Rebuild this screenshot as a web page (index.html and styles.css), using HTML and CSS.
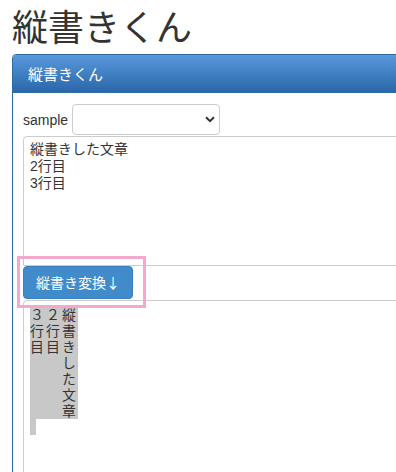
FILE: index.html
```
<!DOCTYPE html>
<html lang="ja">
<head>
    <meta charset="UTF-8">
    <title>縦書きくん</title>
    <link rel="stylesheet" href="styles.css">
</head>
<body>
    <h1 class="title">縦書きくん</h1>

    <div class="panel">
        <div class="panel-heading">縦書きくん</div>
        <div class="panel-body">
            <div class="sample-row">
                <label for="sample">sample</label>
                <div class="select">
                    <svg width="10" height="7" viewBox="0 0 10 7"><path d="M1 1.2 L5 5.2 L9 1.2" fill="none" stroke="#333" stroke-width="2"/></svg>
                </div>
            </div>

            <div class="textarea source">縦書きした文章<br>2行目<br>3行目</div>

            <div class="convert">
                <button class="btn">縦書き変換↓</button>
            </div>

            <div class="textarea result">
                <span class="line">３２縦</span>
                <span class="line">行行書</span>
                <span class="line">目目き</span>
                <span class="line">　　し</span>
                <span class="line">　　た</span>
                <span class="line">　　文</span>
                <span class="line">　　章</span>
                <span class="line blank"></span>
            </div>
        </div>
    </div>
</body>
</html>
```

FILE: styles.css
```
body {
    margin: 0;
    padding: 0 0 0 12px;
    background-color: #fff;
    font-family: "Liberation Sans", "Noto Sans CJK JP", sans-serif;
    color: #333;
    overflow: hidden;
}

.title {
    margin: 4px 0 8px;
    font-family: "Noto Sans CJK JP", sans-serif;
    font-size: 36px;
    font-weight: normal;
    line-height: 42px;
    color: #333;
}

.panel {
    width: 500px;
    border: 1px solid #2e6da4;
    border-radius: 4px 0 0 0;
}

.panel-heading {
    height: 37px;
    padding: 0 15px;
    background: linear-gradient(to bottom, #5898da 0%, #2a67aa 100%);
    border-bottom: 1px solid #2e6da4;
    border-radius: 3px 0 0 0;
    color: #fff;
    font-family: "Noto Sans CJK JP", sans-serif;
    font-size: 15px;
    line-height: 37px;
}

.panel-body {
    padding: 10px 0 0 10px;
    height: 400px;
}

.sample-row {
    display: flex;
    align-items: center;
    gap: 4px;
    height: 32px;
}

.sample-row label {
    font-size: 14px;
    color: #333;
    padding-top: 2px;
}

.select {
    width: 142px;
    height: 29px;
    border: 1px solid #ccc;
    border-radius: 4px;
    display: flex;
    align-items: center;
    justify-content: flex-end;
    padding-right: 4px;
}

.textarea {
    width: 480px;
    border: 1px solid #ccc;
    border-radius: 4px 0 0 0;
    font-family: "Liberation Sans", "Noto Sans CJK JP", sans-serif;
    color: #333;
}

.source {
    height: 118px;
    margin-top: 1px;
    padding: 4px 6px 6px;
    font-size: 14px;
    line-height: 17px;
}

.convert {
    position: relative;
    height: 34px;
}

.convert::after {
    content: "";
    position: absolute;
    left: -6px;
    top: -10px;
    width: 123px;
    height: 46px;
    border: 3px solid #f2a9cb;
    pointer-events: none;
}

.btn {
    height: 33px;
    padding: 0 12px;
    border: 1px solid #3a7fbf;
    border-radius: 4px;
    background-color: #428bca;
    color: #fff;
    font-family: "Noto Sans CJK JP", sans-serif;
    font-size: 14px;
    line-height: 31px;
}

.result {
    height: 200px;
    padding: 6px 6px;
    font-size: 13.9px;
    line-height: 16px;
}

.line {
    display: table;
    height: 16px;
    letter-spacing: 2.1px;
    background-color: #c8c8c8;
    color: #333;
}

.line.blank {
    width: 6px;
}
```
